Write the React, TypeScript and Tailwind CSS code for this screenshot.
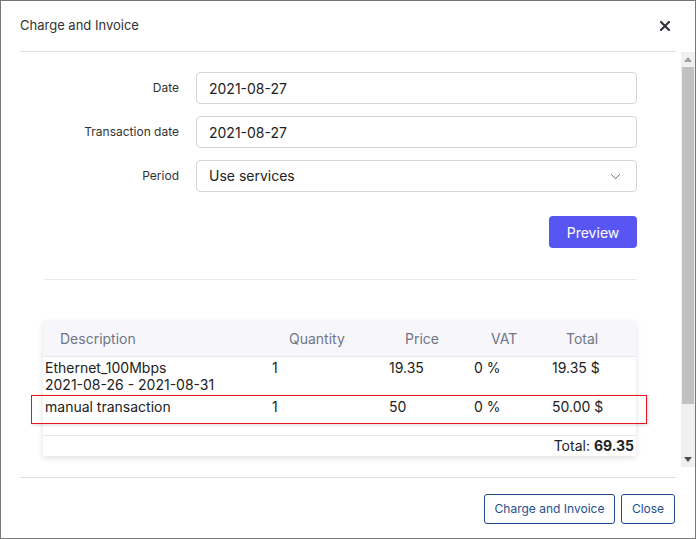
import { ChevronDown } from "lucide-react";

const rows = [
  {
    description: ["Ethernet_100Mbps", "2021-08-26 - 2021-08-31"],
    quantity: "1",
    price: "19.35",
    vat: "0 %",
    total: "19.35 $",
  },
  {
    description: ["manual transaction", ""],
    quantity: "1",
    price: "50",
    vat: "0 %",
    total: "50.00 $",
  },
];

function Field({ label, children }: { label: string; children: React.ReactNode }) {
  return (
    <div className="flex items-center">
      <div className="w-[136px] pr-[1px] text-right text-[12px] text-[#333]">{label}</div>
      <div className="ml-[16px] flex-1">{children}</div>
    </div>
  );
}

export default function App() {
  return (
    <div
      className="relative flex h-[539px] w-[696px] flex-col overflow-hidden border border-[#777] bg-white"
      style={{ fontFamily: "Inter, 'Noto Sans', sans-serif" }}
    >
      {/* header */}
      <div className="mx-[19px] flex h-[51px] shrink-0 items-center justify-between border-b border-[#dedede]">
        <span className="text-[13px] text-[#333]">Charge and Invoice</span>
        <svg width="10" height="10" viewBox="0 0 10 10" className="mr-[6px]">
          <path d="M1 1 L9 9 M9 1 L1 9" stroke="#2d2d3a" strokeWidth="2" strokeLinecap="square" />
        </svg>
      </div>

      {/* body */}
      <div className="flex h-[415px] shrink-0">
        <div className="relative flex-1 overflow-hidden">
          <div className="flex flex-col gap-[12px] pl-[43px] pr-[44px] pt-[20px]">
            <Field label="Date">
              <div className="flex h-[32px] items-center rounded-[4px] border border-[#d3d6dc] px-[12px] text-[14px] text-[#222]">
                2021-08-27
              </div>
            </Field>
            <Field label="Transaction date">
              <div className="flex h-[32px] items-center rounded-[4px] border border-[#d3d6dc] px-[12px] text-[14px] text-[#222]">
                2021-08-27
              </div>
            </Field>
            <Field label="Period">
              <div className="flex h-[32px] items-center justify-between rounded-[4px] border border-[#d3d6dc] pl-[12px] pr-[12px] text-[14px] leading-[14px] text-[#222]">
                <span className="-mt-[1px]">Use services</span>
                <ChevronDown size={17} strokeWidth={1.2} className="text-[#555]" />
              </div>
            </Field>
          </div>

          <div className="flex justify-end pr-[44px] pt-[24px]">
            <button className="h-[32px] w-[88px] rounded-[4px] bg-[#5856f2] text-[14px] text-white">
              Preview
            </button>
          </div>

          <div className="ml-[43px] mr-[44px] mt-[31px] border-t border-[#e7e9ee]" />

          <div className="ml-[42px] mr-[45px] mt-[41px] bg-white shadow-[0_2px_6px_rgba(0,0,0,0.12)]">
            <table className="w-full border-collapse text-left text-[14px]">
              <thead>
                <tr className="h-[35px] border-b border-[#e6e7ee] bg-[#f7f7fb] text-[#6f7585]">
                  <th className="w-[229px] pl-[17px] font-normal">Description</th>
                  <th className="w-[116px] pl-[17px] font-normal">Quantity</th>
                  <th className="w-[86px] pl-[17px] font-normal">Price</th>
                  <th className="w-[77px] pl-[17px] font-normal">VAT</th>
                  <th className="pl-[15px] font-normal">Total</th>
                </tr>
              </thead>
              <tbody className="text-[#222]">
                {rows.map((row) => (
                  <tr key={row.description[0]} className="align-top leading-[17px]">
                    <td className="pl-[2px] pt-[2px] pb-[3px]">
                      <div>{row.description[0]}</div>
                      <div className="h-[17px]">{row.description[1]}</div>
                    </td>
                    <td className="pl-[0px] pt-[2px]">{row.quantity}</td>
                    <td className="pl-[1px] pt-[2px]">{row.price}</td>
                    <td className="pl-[0px] pt-[2px]">{row.vat}</td>
                    <td className="pl-[1px] pt-[2px]">{row.total}</td>
                  </tr>
                ))}
                <tr className="border-t border-[#e6e7ee]">
                  <td colSpan={5} className="h-[21px] pr-[2px] text-right leading-[20px]">
                    Total: <span className="font-bold">69.35</span>
                  </td>
                </tr>
              </tbody>
            </table>
          </div>

          {/* highlight box */}
          <div className="absolute left-[30px] top-[343px] h-[29px] w-[616px] border border-[#e8121b] shadow-[1px_1px_3px_rgba(0,0,0,0.15)]" />
        </div>

        {/* scrollbar */}
        <div className="flex w-[14px] shrink-0 flex-col bg-[#f0f0f0]">
          <div className="flex h-[15px] items-center justify-center">
            <svg width="8" height="5" viewBox="0 0 8 5">
              <path d="M0 5 L4 0 L8 5 Z" fill="#a3a3a3" />
            </svg>
          </div>
          <div className="mx-[1px] h-[337px] bg-[#c1c1c1]" />
          <div className="flex-1" />
          <div className="flex h-[15px] items-center justify-center">
            <svg width="8" height="5" viewBox="0 0 8 5">
              <path d="M0 0 L8 0 L4 5 Z" fill="#505050" />
            </svg>
          </div>
        </div>
      </div>

      {/* footer */}
      <div className="mx-[19px] mt-[10px] border-t border-[#dedede]" />
      <div className="mr-[20px] mt-[16px] flex justify-end gap-[6px]">
        <button className="h-[30px] w-[131px] rounded-[3px] border border-[#1f4b8e] text-[12px] text-[#234f8f]">
          Charge and Invoice
        </button>
        <button className="h-[30px] w-[54px] rounded-[3px] border border-[#1f4b8e] text-[12px] text-[#234f8f]">
          Close
        </button>
      </div>
    </div>
  );
}
